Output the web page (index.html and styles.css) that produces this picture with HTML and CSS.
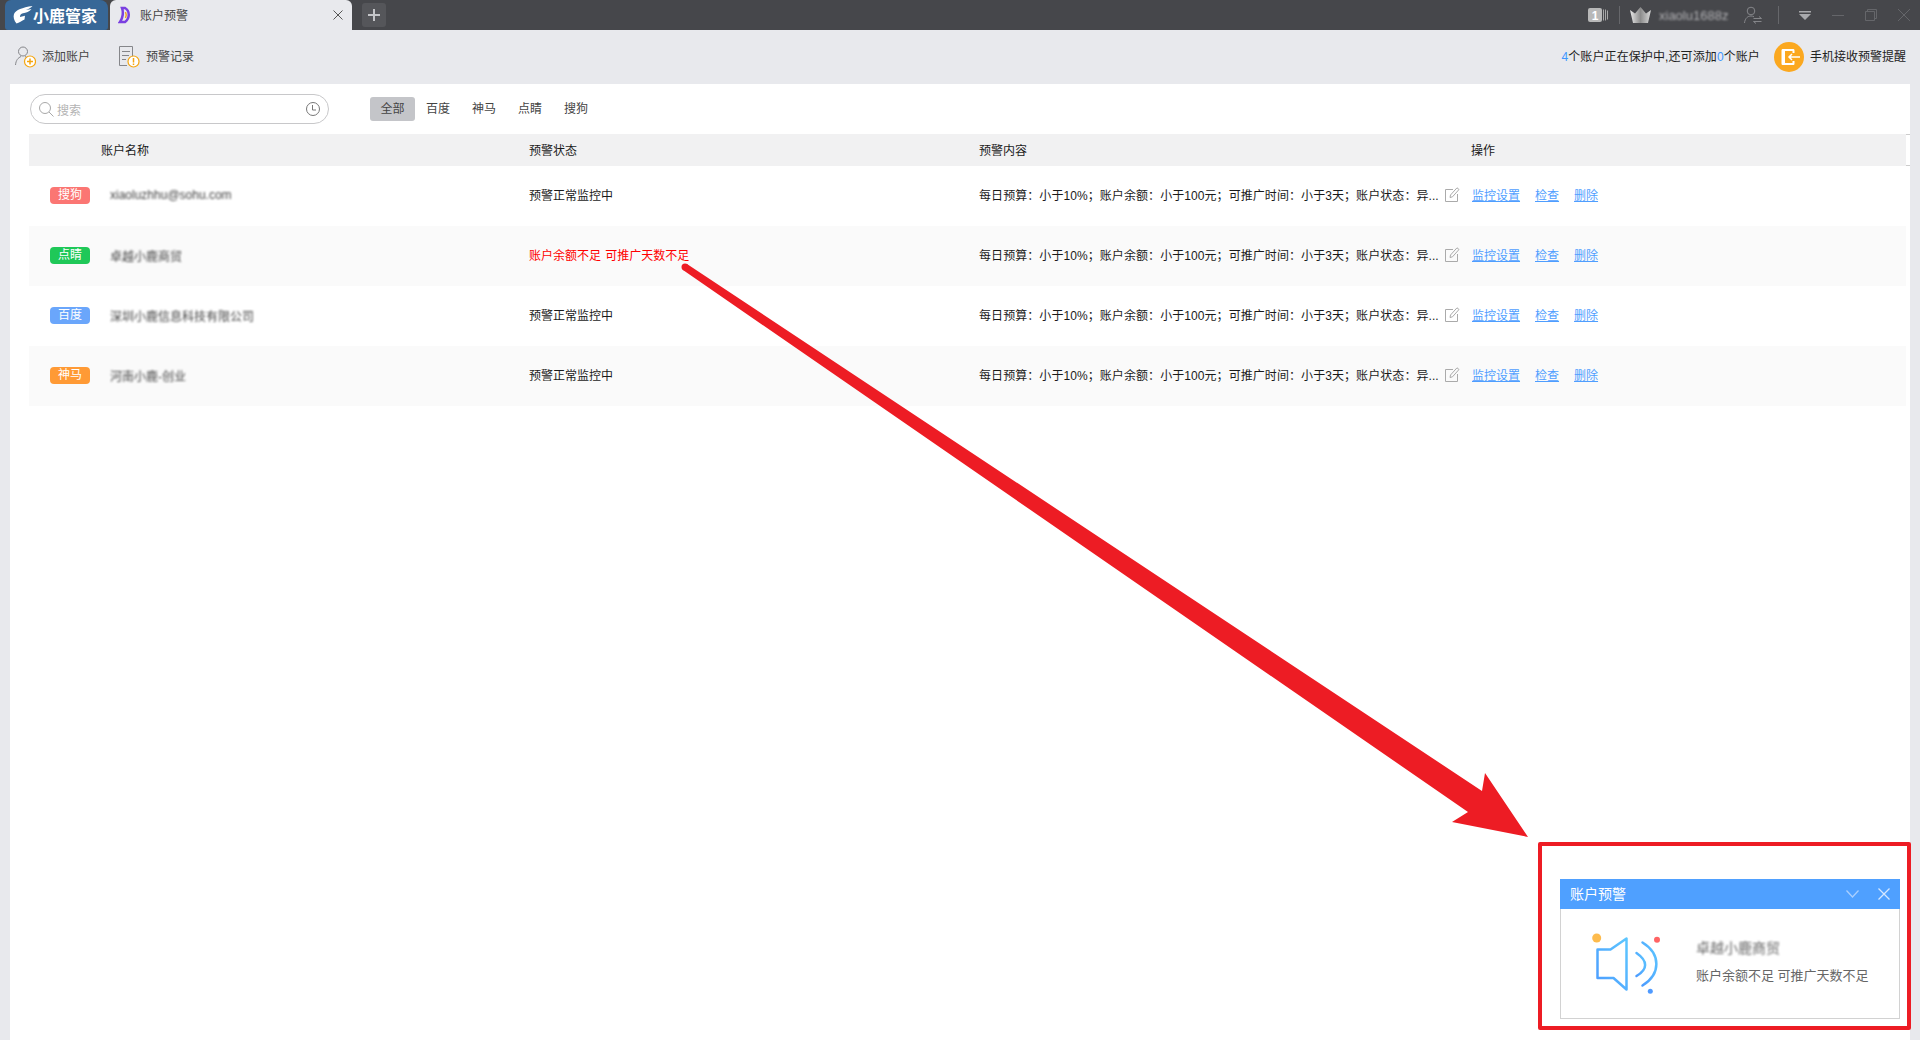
FILE: index.html
```html
<!DOCTYPE html>
<html>
<head>
<meta charset="utf-8">
<title>账户预警</title>
<link rel="stylesheet" href="styles.css">
</head>
<body>
<div class="titlebar">
  <div class="logo-tab">
    <svg class="logo-mark" width="20" height="18" viewBox="0 0 20 18"><path fill="#fff" d="M1 8C3 4 9 1.500 19.500 0C18 2 15.500 3 13 3.800C15 3.800 17 3.500 18.500 3C16.500 6 13 6.800 10 7.200C8 7.500 6.800 9 7 11L12 9.800L11.500 13.500C9 15 6 16.500 3.500 17.500C1 14.500 0 11 1 8Z"/></svg>
    <span>小鹿管家</span>
  </div>
  <div class="tab">
    <svg width="14" height="18" viewBox="0 0 14 18"><path fill="none" stroke="#7a3fe0" stroke-width="2.500" d="M4 2H7C12 5 12 12 7 16H2C5 12 5.500 6 4 2Z"/><path fill="none" stroke="#f0a020" stroke-width="1.500" d="M7.500 6C8.500 8 8.500 10 7.500 12"/></svg>
    <span class="tab-title">账户预警</span>
    <svg class="tab-close" width="10" height="10" viewBox="0 0 10 10"><path stroke="#555" d="M.5 .5L9.500 9.500M9.500 .5L.5 9.500"/></svg>
  </div>
  <div class="new-tab">
    <svg width="12" height="12" viewBox="0 0 12 12"><path stroke="#c4c5c8" stroke-width="2" d="M6 0V12M0 6H12"/></svg>
  </div>
  <div class="win-tools">
    <svg class="counter" width="20" height="14" viewBox="0 0 20 14"><rect width="14" height="14" rx="2" fill="#b8b8b8"/><text x="7" y="11.500" text-anchor="middle" font-size="12" font-weight="bold" font-family="Liberation Sans" fill="#fff">1</text><path stroke="#a8a8a8" d="M15.500 1.500V12.500M17.500 1.500V12.500M19.500 2.500V11.500"/></svg>
    <span class="sep sep-a"></span>
    <svg class="crown" width="21" height="16" viewBox="0 0 21 16"><defs><linearGradient id="cg" x1="0" x2="1" y1="0" y2="0"><stop offset="0" stop-color="#e8e8e8"/><stop offset=".5" stop-color="#8c8c8c"/><stop offset="1" stop-color="#d8d8d8"/></linearGradient></defs><path fill="url(#cg)" d="M0 3L5 6.500L10.500 0L16 6.500L21 3L18 16H3Z"/></svg>
    <span class="vip-name">xiaolu1688z</span>
    <svg class="swap" width="18" height="18" viewBox="0 0 18 18"><g fill="none" stroke="#85868a"><circle cx="7" cy="5" r="3.800"/><path d="M.5 17C1 12 4 10 7 10C8 10 9 10.200 10 10.800"/><path d="M9.500 12.500H17.500L15 10.500M17.500 15.500H9.500L12 17.500"/></g></svg>
    <span class="sep sep-b"></span>
    <svg class="drop" width="12" height="9" viewBox="0 0 12 9"><path fill="#a8a9ac" d="M0 0H12V1.500H0ZM0 3H12L6 9Z"/></svg>
    <svg class="win-btn" width="12" height="12" viewBox="0 0 12 12"><path stroke="#65666a" d="M0 6.500H12"/></svg>
    <svg class="win-btn" width="12" height="12" viewBox="0 0 12 12"><path fill="none" stroke="#65666a" d="M.5 2.500H9.500V11.500H.5ZM2.500 2.500V.5H11.500V9.500H9.500"/></svg>
    <svg class="win-btn" width="12" height="12" viewBox="0 0 12 12"><path stroke="#65666a" d="M0 0L12 12M12 0L0 12"/></svg>
  </div>
</div>

<div class="toolbar">
  <div class="tool tool-add">
    <svg width="21" height="22" viewBox="0 0 21 22"><g fill="none" stroke="#85868a"><circle cx="8" cy="5.500" r="4.500"/><path d="M.5 19C1 14 3 12 6 10.500M10 10.500C11 11 12 11.500 12.500 12"/></g><circle cx="15" cy="15.500" r="5.500" fill="#fff" stroke="#f5a50f" stroke-width="1.200"/><path stroke="#f5a50f" stroke-width="1.500" d="M15 12.500V18.500M12 15.500H18"/></svg>
    <span>添加账户</span>
  </div>
  <div class="tool tool-log">
    <svg width="21" height="22" viewBox="0 0 21 22"><g fill="none" stroke="#85868a"><path d="M8 19.500H.5V.5H13.500V11"/><path d="M3 5.500H11M3 9.500H10M3 13.500H7"/></g><circle cx="14.500" cy="15.500" r="5.500" fill="#fff" stroke="#f5a50f" stroke-width="1.200"/><path stroke="#f5a50f" stroke-width="1.500" d="M14.500 12V16.500M14.500 17.500V19"/></svg>
    <span>预警记录</span>
  </div>
  <div class="protect">
    <span class="protect-text"><b>4</b>个账户正在保护中,还可添加<b>0</b>个账户</span>
    <svg class="phone" width="30" height="30" viewBox="0 0 30 30"><circle cx="15" cy="15" r="15" fill="#fba81f"/><path fill="#fff" d="M9 7H19C20 7 20.500 7.500 20.500 8.500V11H18.500V9H11V21H18.500V19H20.500V21.500C20.500 22.500 20 23 19 23H9C8 23 7.500 22.500 7.500 21.500V8.500C7.500 7.500 8 7 9 7Z"/><path stroke="#fff" stroke-width="1.500" fill="none" d="M26 15H15M18 12L15 15L18 18"/></svg>
    <span>手机接收预警提醒</span>
  </div>
</div>

<div class="main">
  <div class="filter-row">
    <div class="search">
      <svg width="15" height="15" viewBox="0 0 15 15"><circle cx="6" cy="6" r="5.500" fill="none" stroke="#a8a8a8"/><path stroke="#a8a8a8" d="M10 10L14.500 14.500"/></svg>
      <span class="placeholder">搜索</span>
      <svg class="history" width="14" height="14" viewBox="0 0 14 14"><circle cx="7" cy="7" r="6.500" fill="none" stroke="#777"/><path fill="none" stroke="#777" d="M6.500 3V8H10"/></svg>
    </div>
    <div class="filters">
      <span class="filter filter-on">全部</span>
      <span class="filter">百度</span>
      <span class="filter">神马</span>
      <span class="filter">点睛</span>
      <span class="filter">搜狗</span>
    </div>
  </div>

  <div class="table">
    <div class="thead">
      <div class="thead-cells cols">
        <span></span>
        <span>账户名称</span>
        <span>预警状态</span>
        <span>预警内容</span>
        <span>操作</span>
      </div>
      <div class="thead-end"></div>
    </div>

    <div class="row cols">
      <span class="badge badge-sogou">搜狗</span>
      <span class="name">xiaoluzhhu@sohu.com</span>
      <span>预警正常监控中</span>
      <div class="summary"><span class="summary-text">每日预算：小于10%；账户余额：小于100元；可推广时间：小于3天；账户状态：异...</span><svg class="edit" width="15" height="15" viewBox="0 0 15 15"><path fill="none" stroke="#aaa" d="M8 2.500H.5V14.500H12.500V7"/><path fill="none" stroke="#aaa" d="M5 10.500L5.500 8L12 .8L14 2.500L7.500 9.800Z"/></svg></div>
      <div class="ops"><a>监控设置</a><a>检查</a><a>删除</a></div>
    </div>
    <div class="row cols">
      <span class="badge badge-dianjing">点睛</span>
      <span class="name">卓越小鹿商贸</span>
      <span class="alert">账户余额不足 可推广天数不足</span>
      <div class="summary"><span class="summary-text">每日预算：小于10%；账户余额：小于100元；可推广时间：小于3天；账户状态：异...</span><svg class="edit" width="15" height="15" viewBox="0 0 15 15"><path fill="none" stroke="#aaa" d="M8 2.500H.5V14.500H12.500V7"/><path fill="none" stroke="#aaa" d="M5 10.500L5.500 8L12 .8L14 2.500L7.500 9.800Z"/></svg></div>
      <div class="ops"><a>监控设置</a><a>检查</a><a>删除</a></div>
    </div>
    <div class="row cols">
      <span class="badge badge-baidu">百度</span>
      <span class="name">深圳小鹿信息科技有限公司</span>
      <span>预警正常监控中</span>
      <div class="summary"><span class="summary-text">每日预算：小于10%；账户余额：小于100元；可推广时间：小于3天；账户状态：异...</span><svg class="edit" width="15" height="15" viewBox="0 0 15 15"><path fill="none" stroke="#aaa" d="M8 2.500H.5V14.500H12.500V7"/><path fill="none" stroke="#aaa" d="M5 10.500L5.500 8L12 .8L14 2.500L7.500 9.800Z"/></svg></div>
      <div class="ops"><a>监控设置</a><a>检查</a><a>删除</a></div>
    </div>
    <div class="row cols">
      <span class="badge badge-shenma">神马</span>
      <span class="name">河南小鹿-创业</span>
      <span>预警正常监控中</span>
      <div class="summary"><span class="summary-text">每日预算：小于10%；账户余额：小于100元；可推广时间：小于3天；账户状态：异...</span><svg class="edit" width="15" height="15" viewBox="0 0 15 15"><path fill="none" stroke="#aaa" d="M8 2.500H.5V14.500H12.500V7"/><path fill="none" stroke="#aaa" d="M5 10.500L5.500 8L12 .8L14 2.500L7.500 9.800Z"/></svg></div>
      <div class="ops"><a>监控设置</a><a>检查</a><a>删除</a></div>
    </div>
  </div>
</div>

<!-- red arrow drawn over the page -->
<svg class="arrow" width="1920" height="1040" viewBox="0 0 1920 1040">
  <circle cx="685" cy="267" r="3.500" fill="#ed1c24"/>
  <polygon fill="#ed1c24" points="687,264 1482,791 1485,773 1528,837 1452,822 1468,812 683,270"/>
</svg>

<div class="callout">
  <div class="popup">
    <div class="popup-head">
      <span>账户预警</span>
      <svg class="popup-min" width="13" height="8" viewBox="0 0 13 8"><path fill="none" stroke="#a9cfff" stroke-width="1.300" d="M.5 .5L6.500 7L12.500 .5"/></svg>
      <svg class="popup-close" width="12" height="12" viewBox="0 0 12 12"><path stroke="#d5e7ff" stroke-width="1.300" d="M.5 .5L11.500 11.500M11.500 .5L.5 11.500"/></svg>
    </div>
    <div class="popup-body">
      <svg class="speaker" width="100" height="75" viewBox="0 0 100 75">
        <defs><linearGradient id="sg" x1="0" x2="1" y1="1" y2="0"><stop offset="0" stop-color="#4c9cff"/><stop offset="1" stop-color="#5cc6ff"/></linearGradient></defs>
        <circle cx="11.700" cy="13" r="4.500" fill="#fdbb4d"/>
        <circle cx="72" cy="14.700" r="3" fill="#ff6464"/>
        <circle cx="65.300" cy="66.300" r="2.500" fill="#4f9aff"/>
        <g fill="none" stroke="url(#sg)" stroke-width="2.500" stroke-linecap="round" stroke-linejoin="round">
          <path d="M12.500 24.500H25.500L41.500 13.500V64.500L28.500 53H12.500Z"/>
          <path d="M51.500 28C63 36 63 44 51.500 51"/>
          <path d="M57.500 17.500C76 29 76 49 57.500 60.500"/>
        </g>
      </svg>
      <div class="popup-text">
        <span class="popup-name">卓越小鹿商贸</span>
        <span class="popup-msg">账户余额不足 可推广天数不足</span>
      </div>
    </div>
  </div>
</div>
</body>
</html>
```

FILE: styles.css
```css
* {
  box-sizing: border-box;
}
html, body {
  margin: 0;
  height: 1040px;
  overflow: hidden;
}
body {
  display: flex;
  flex-direction: column;
  position: relative;
  background: #e8e9ed;
  color: #333;
  font-family: "Liberation Sans", "Noto Sans CJK SC", sans-serif;
  font-size: 12px;
}

/* title bar */
.titlebar {
  display: flex;
  height: 30px;
  flex: none;
  background: #46474b;
}
.logo-tab {
  display: flex;
  align-items: center;
  width: 103px;
  margin-left: 5px;
  padding-left: 8px;
  background: #376797;
  border-radius: 6px 8px 3px 3px;
  color: #fff;
  font-size: 16px;
  font-weight: bold;
}
.logo-mark {
  flex: none;
}
.tab {
  display: flex;
  align-items: center;
  width: 242px;
  margin-left: 2px;
  padding-left: 8px;
  background: #e8e9ed;
  border-radius: 6px 6px 0 0;
}
.tab-title {
  margin-left: 8px;
  padding-bottom: 2px;
  color: #444;
}
.tab-close {
  margin-left: auto;
  margin-right: 9px;
}
.new-tab {
  display: flex;
  align-items: center;
  justify-content: center;
  width: 24px;
  height: 24px;
  margin: 3px 0 0 10px;
  background: #55565a;
  border-radius: 3px;
}
.win-tools {
  display: flex;
  align-items: center;
  margin-left: auto;
  padding-right: 10px;
}
.sep {
  width: 1px;
  height: 18px;
  background: #66676b;
}
.sep-a {
  margin-left: 11px;
}
.crown {
  margin-left: 10px;
}
.vip-name {
  width: 76px;
  margin-left: 8px;
  color: #b0b0b3;
  font-size: 13px;
  white-space: nowrap;
  filter: blur(1.3px);
}
.swap {
  margin-left: 9px;
}
.sep-b {
  margin-left: 16px;
}
.drop {
  margin-left: 20px;
}
.win-btn {
  margin-left: 21px;
}

/* toolbar */
.toolbar {
  display: flex;
  align-items: center;
  height: 54px;
  flex: none;
  padding: 0 14px 0 15px;
}
.tool {
  display: flex;
  align-items: center;
  gap: 6px;
  color: #444;
}
.tool span {
  padding-bottom: 3px;
}
.tool-log {
  margin-left: 29px;
}
.protect {
  display: flex;
  align-items: center;
  margin-left: auto;
  color: #222;
}
.protect span {
  padding-bottom: 3px;
}
.protect-text {
  letter-spacing: .1px;
}
.protect b {
  color: #3e97ff;
  font-weight: normal;
}
.phone {
  margin: 0 6px 0 14px;
}

/* main panel */
.main {
  flex: 1;
  margin: 0 10px;
  padding: 10px 0 0 19px;
  background: #fff;
}
.filter-row {
  display: flex;
  align-items: center;
  height: 30px;
  padding-left: 1px;
}
.search {
  display: flex;
  align-items: center;
  width: 299px;
  height: 30px;
  padding: 0 8px;
  border: 1px solid #c8c8ca;
  border-radius: 15px;
}
.placeholder {
  margin-left: 3px;
  color: #b4b4b4;
}
.history {
  margin-left: auto;
}
.filters {
  display: flex;
  margin-left: 41px;
}
.filter {
  width: 46px;
  height: 24px;
  line-height: 25px;
  text-align: center;
  color: #444;
}
.filter-on {
  width: 45px;
  background: #c4c5c9;
  border-radius: 3px;
}

/* table */
.table {
  margin-top: 10px;
}
.cols {
  display: grid;
  grid-template-columns: 72px 428px 450px 492px 1fr;
  align-items: center;
}
.thead {
  display: flex;
  height: 32px;
}
.thead-cells {
  flex: 1;
  padding-bottom: 2px;
  background: #f1f1f2;
  color: #1a1a1a;
}
.thead-end {
  width: 4px;
  border-top: 1px solid #ccc;
  border-bottom: 1px solid #ccc;
}
.row {
  height: 60px;
  margin-right: 4px;
  padding-bottom: 4px;
  color: #1a1a1a;
}
.row:nth-child(odd) {
  background: #fafafa;
}
.badge {
  justify-self: start;
  width: 40px;
  height: 17px;
  margin-top: 2px;
  margin-left: 21px;
  line-height: 17px;
  text-align: center;
  border-radius: 4px;
  color: #fff;
}
.badge-sogou {
  background: #fb7673;
}
.badge-dianjing {
  background: #1fc858;
}
.badge-baidu {
  background: #6aa6fb;
}
.badge-shenma {
  background: #ff9a35;
}
.name {
  margin-top: 2px;
  padding-left: 9px;
  color: #444;
  filter: blur(1.2px);
}
.alert {
  color: #f00;
  word-spacing: 1px;
}
.summary {
  display: flex;
  align-items: center;
}
.summary-text {
  width: 460px;
  white-space: nowrap;
  letter-spacing: .07px;
}
.edit {
  margin-left: 6px;
}
.ops {
  display: flex;
  gap: 15px;
  padding-left: 1px;
}
.ops a {
  color: #4f9eff;
  text-decoration: underline;
}

/* overlays */
.arrow {
  position: absolute;
  left: 0;
  top: 0;
  pointer-events: none;
}
.callout {
  position: absolute;
  left: 1538px;
  top: 842px;
  width: 373px;
  height: 188px;
  padding: 33px 7px 0 18px;
  border: 4px solid #ed1c24;
  border-radius: 2px;
}
.popup {
  display: flex;
  flex-direction: column;
  width: 340px;
  height: 140px;
  background: #fff;
}
.popup-head {
  display: flex;
  align-items: center;
  height: 30px;
  flex: none;
  padding: 0 10px;
  background: #4fa0ff;
  color: #fff;
  font-size: 14px;
}
.popup-head span {
  padding-bottom: 2px;
}
.popup-min {
  margin-left: auto;
}
.popup-close {
  margin-left: 19px;
}
.popup-body {
  display: flex;
  flex: 1;
  padding: 16px 0 0 24px;
  border: 1px solid #d2d2d2;
  border-top: 0;
}
.speaker {
  flex: none;
}
.popup-text {
  display: flex;
  flex-direction: column;
  margin: 14px 0 0 11px;
  gap: 8px;
  line-height: 19px;
  font-size: 13px;
  color: #666;
}
.popup-name {
  filter: blur(1.3px);
  font-size: 14px;
}
```
